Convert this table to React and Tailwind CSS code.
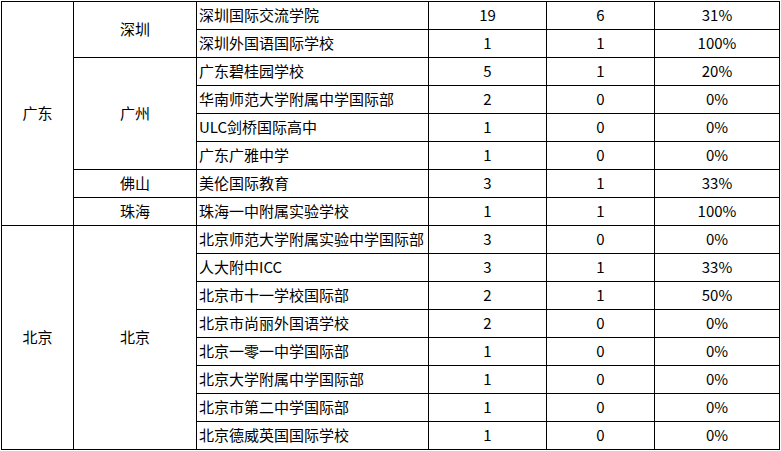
import React from "react";

const rows = [
  { p: "广东", ps: 8, c: "深圳", cs: 2, s: "深圳国际交流学院", a: "19", b: "6", r: "31%" },
  { s: "深圳外国语国际学校", a: "1", b: "1", r: "100%" },
  { c: "广州", cs: 4, s: "广东碧桂园学校", a: "5", b: "1", r: "20%" },
  { s: "华南师范大学附属中学国际部", a: "2", b: "0", r: "0%" },
  { s: "ULC剑桥国际高中", a: "1", b: "0", r: "0%" },
  { s: "广东广雅中学", a: "1", b: "0", r: "0%" },
  { c: "佛山", cs: 1, s: "美伦国际教育", a: "3", b: "1", r: "33%" },
  { c: "珠海", cs: 1, s: "珠海一中附属实验学校", a: "1", b: "1", r: "100%" },
  { p: "北京", ps: 8, c: "北京", cs: 8, s: "北京师范大学附属实验中学国际部", a: "3", b: "0", r: "0%" },
  { s: "人大附中ICC", a: "3", b: "1", r: "33%" },
  { s: "北京市十一学校国际部", a: "2", b: "1", r: "50%" },
  { s: "北京市尚丽外国语学校", a: "2", b: "0", r: "0%" },
  { s: "北京一零一中学国际部", a: "1", b: "0", r: "0%" },
  { s: "北京大学附属中学国际部", a: "1", b: "0", r: "0%" },
  { s: "北京市第二中学国际部", a: "1", b: "0", r: "0%" },
  { s: "北京德威英国国际学校", a: "1", b: "0", r: "0%" },
];

const spanCls = {
  1: "row-span-1",
  2: "row-span-2",
  4: "row-span-4",
  8: "row-span-8",
};

const cell = "border-r border-b border-black flex items-center pb-[3px]";

export default function App() {
  return (
    <div
      className="w-[781px] h-[451px] bg-white text-black pl-[1px] pt-[1px] overflow-hidden"
      style={{ fontFamily: '"Noto Sans CJK SC", "Noto Sans", sans-serif' }}
    >
      <div className="grid grid-cols-[72px_123px_232px_118px_108px_125px] auto-rows-[28px] border-l border-t border-black w-[779px] text-[15px] leading-none">
        {rows.map((row, i) => (
          <React.Fragment key={i}>
            {row.p && (
              <div className={`${cell} ${spanCls[row.ps]} justify-center`}>{row.p}</div>
            )}
            {row.c && (
              <div className={`${cell} ${spanCls[row.cs]} justify-center`}>{row.c}</div>
            )}
            <div className={`${cell} pl-[2px] whitespace-nowrap`}>{row.s}</div>
            <div className={`${cell} justify-center`}>{row.a}</div>
            <div className={`${cell} justify-center`}>{row.b}</div>
            <div className={`${cell} justify-center`}>{row.r}</div>
          </React.Fragment>
        ))}
      </div>
    </div>
  );
}
